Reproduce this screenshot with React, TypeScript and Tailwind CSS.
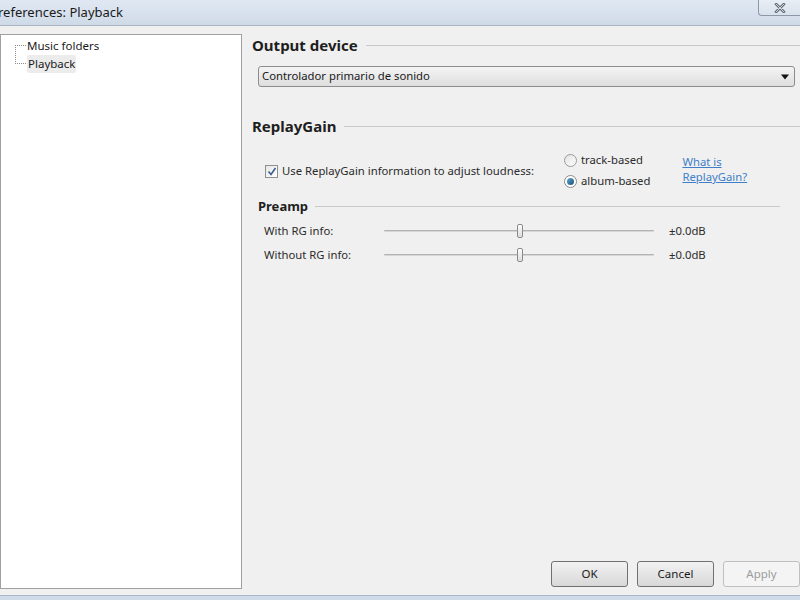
import React from "react";

const font = { fontFamily: '"Noto Sans", "Open Sans", sans-serif' };

function Heading({ title }: { title: string }) {
  return (
    <div className="flex items-center">
      <span className="text-[15px] font-bold text-[#1e1e1e] leading-none">{title}</span>
      <div className="ml-2 h-px flex-1 bg-[#c9c9c9]" />
    </div>
  );
}

function Slider({ label }: { label: string }) {
  return (
    <div className="flex h-[24px] items-center">
      <span className="w-[120px] text-[11.3px] text-[#2b2b2b]">{label}</span>
      <div className="relative h-[14px] w-[270px]">
        <div className="absolute left-0 right-0 top-[6px] h-[2px] rounded border-t border-[#b4b4b4] bg-[#d6d6d6]" />
        <div className="absolute left-[133px] top-0 h-[14px] w-[6px] rounded-[2px] border border-[#8a8a8a] bg-gradient-to-b from-[#fdfdfd] to-[#dcdcdc]" />
      </div>
      <span className="ml-[15px] text-[11.3px] text-[#2b2b2b]">±0.0dB</span>
    </div>
  );
}

export default function App() {
  return (
    <div className="flex h-[600px] w-[800px] flex-col overflow-hidden bg-[#f0f0f0]" style={font}>
      {/* Title bar */}
      <div className="relative flex h-[26px] items-center border-b border-[#aab6c4] bg-gradient-to-b from-[#dfe8f2] via-[#d8e2ee] to-[#cfdae7]">
        <span className="-ml-[2px] text-[13px] text-[#1a1a1a]">references: Playback</span>
        <div className="absolute right-0 top-0 flex h-[16px] w-[42px] items-center justify-center rounded-bl-[4px] border-b border-l border-[#8c98a8] bg-gradient-to-b from-[#e8eef5] to-[#d9e2ec]">
          <svg width="12" height="10" viewBox="0 0 12 10">
            <path d="M2 1 L10 9 M10 1 L2 9" stroke="#606a75" strokeWidth="2.6" strokeLinecap="round" />
            <path d="M2 1 L10 9 M10 1 L2 9" stroke="#dfe5ec" strokeWidth="0.9" strokeLinecap="round" />
          </svg>
        </div>
      </div>

      <div className="flex flex-1 pt-[8px]">
        {/* Tree */}
        <div className="relative h-[555px] w-[242px] border border-[#a0a0a0] bg-white">
          <div className="absolute left-[14px] top-[10px] h-[19px] w-[11px] border-b border-l border-t border-dotted border-[#8a8a8a]" />
          <div className="ml-[26px] mt-[2px] flex flex-col text-[11.5px] text-[#1a1a1a]">
            <span className="h-[18px] leading-[18px]">Music folders</span>
            <span className="h-[18px] w-fit rounded-[2px] bg-[#ececec] px-[1px] leading-[18px]">Playback</span>
          </div>
        </div>

        {/* Settings */}
        <div className="flex flex-1 flex-col pl-[10px]">
          <div className="mt-[4px]">
            <Heading title="Output device" />
          </div>
          <div className="ml-[6px] mr-[5px] mt-[13px] flex h-[21px] items-center justify-between rounded-[3px] border border-[#8d8d8d] bg-gradient-to-b from-[#f4f4f4] to-[#dedede] px-[3px]">
            <span className="text-[11.3px] text-[#1a1a1a]">Controlador primario de sonido</span>
            <svg width="10" height="6" viewBox="0 0 10 6" className="mr-[1px]">
              <path d="M1 0.5 H9 L5 5.5 Z" fill="#111" />
            </svg>
          </div>

          <div className="mt-[32px]">
            <Heading title="ReplayGain" />
          </div>

          <div className="ml-[13px] mt-[16px] flex items-start">
            <div className="mt-[13px] flex items-center">
              <div className="flex h-[13px] w-[13px] items-center justify-center border border-[#8f8f8f] bg-gradient-to-br from-[#e6e6e6] to-white">
                <svg width="10" height="9" viewBox="0 0 10 9">
                  <path d="M1.5 4.5 L4 7.5 L8.5 1" fill="none" stroke="#3a5f8c" strokeWidth="1.6" />
                </svg>
              </div>
              <span className="ml-[4px] text-[11.3px] text-[#2b2b2b]">Use ReplayGain information to adjust loudness:</span>
            </div>
            <div className="ml-[30px] flex flex-col">
              <div className="flex h-[21px] items-center">
                <div className="h-[13px] w-[13px] rounded-full border border-[#9a9a9a] bg-gradient-to-br from-[#e2e2e2] to-white" />
                <span className="ml-[4px] text-[11.3px] text-[#2b2b2b]">track-based</span>
              </div>
              <div className="flex h-[21px] items-center">
                <div className="flex h-[13px] w-[13px] items-center justify-center rounded-full border border-[#8a8a8a] bg-white">
                  <div className="h-[7px] w-[7px] rounded-full bg-gradient-to-br from-[#5fa9d6] to-[#1b4f73]" />
                </div>
                <span className="ml-[4px] text-[11.3px] text-[#2b2b2b]">album-based</span>
              </div>
            </div>
            <div className="ml-[32px] mt-[4px] flex flex-col text-[11.3px] leading-[15px] text-[#3f7fc8] underline">
              <span>What is</span>
              <span>ReplayGain?</span>
            </div>
          </div>

          <div className="ml-[6px] mr-[20px] mt-[8px]">
            <div className="flex items-center">
              <span className="text-[13px] font-bold leading-none text-[#1e1e1e]">Preamp</span>
              <div className="ml-[7px] h-px flex-1 bg-[#c9c9c9]" />
            </div>
          </div>

          <div className="ml-[12px] mt-[6px] flex flex-col">
            <Slider label="With RG info:" />
            <Slider label="Without RG info:" />
          </div>

          <div className="mb-[8px] mt-auto flex justify-end gap-[9px]">
            <button className="h-[26px] w-[77px] rounded-[3px] border border-[#707070] bg-gradient-to-b from-[#f2f2f2] to-[#d8d8d8] text-[11.5px] text-[#1a1a1a]">OK</button>
            <button className="h-[26px] w-[77px] rounded-[3px] border border-[#707070] bg-gradient-to-b from-[#f2f2f2] to-[#d8d8d8] text-[11.5px] text-[#1a1a1a]">Cancel</button>
            <button className="h-[26px] w-[77px] rounded-[3px] border border-[#c0c0c0] bg-[#f4f4f4] text-[11.5px] text-[#9c9c9c]">Apply</button>
          </div>
        </div>
      </div>

      <div className="h-[5px] border-t border-[#a9b8c8] bg-[#cfdbe8]" />
    </div>
  );
}
